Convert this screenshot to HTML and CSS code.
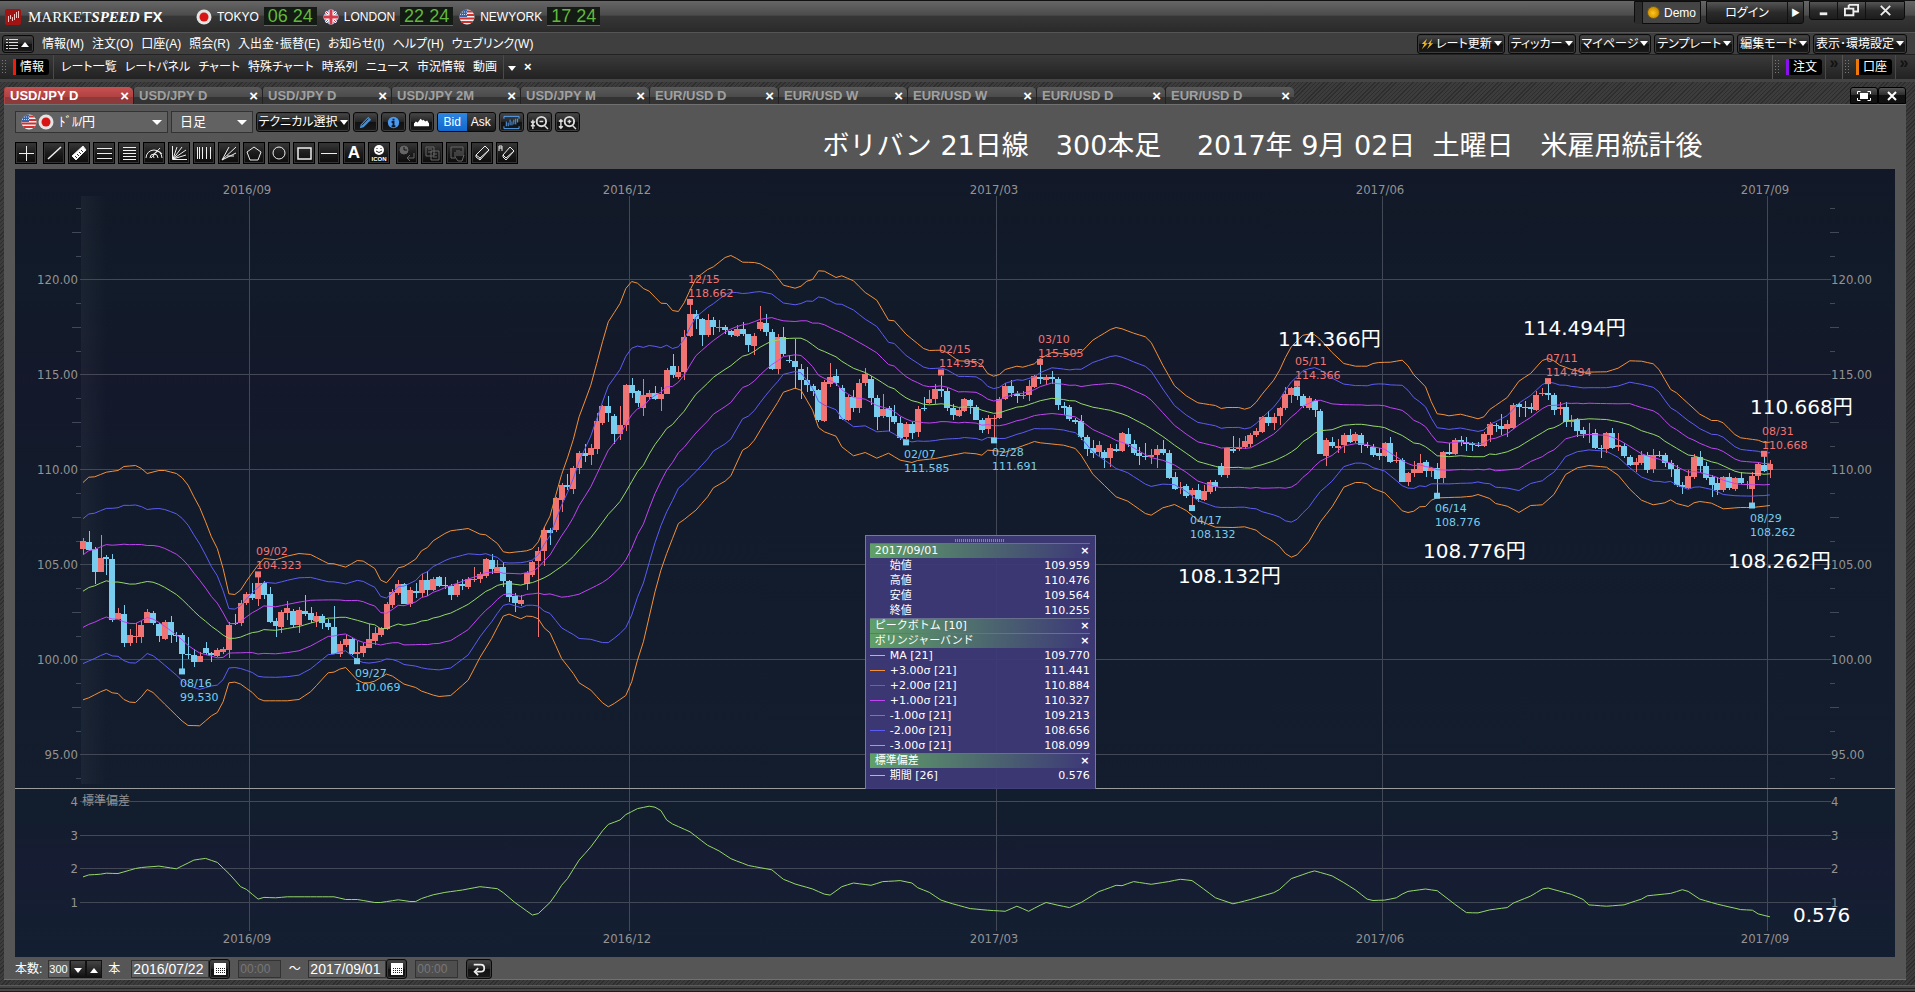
FILE: index.html
```html
<!DOCTYPE html>
<html lang="ja">
<head>
    <meta charset="UTF-8">
    <meta name="viewport" content="width=device-width, initial-scale=1.0">
    <title>MARKETSPEED FX</title>
    <link rel="stylesheet" href="styles.css">
</head>
<body>
    <!-- shared symbols -->
    <svg class="defs" width="0" height="0" aria-hidden="true">
        <symbol id="flag-jp" viewBox="0 0 16 16">
            <circle cx="8" cy="8" r="7.5" fill="#e4e4e4"/>
            <circle cx="8" cy="8" r="4.5" fill="#d81414"/>
        </symbol>
        <symbol id="flag-us" viewBox="0 0 16 16">
            <clipPath id="round"><circle cx="8" cy="8" r="7.5"/></clipPath>
            <g clip-path="url(#round)">
                <rect width="16" height="16" fill="#f2f2f2"/>
                <path d="M0 2.500h16M0 6h16M0 9.500h16M0 13h16" stroke="#cf3030" stroke-width="1.8"/>
                <rect width="8" height="8" fill="#3a64a8"/>
                <path d="M1 3h7M1 5.500h7" stroke="#c8d6ee" stroke-dasharray="1 1"/>
            </g>
        </symbol>
        <symbol id="flag-uk" viewBox="0 0 16 16">
            <g clip-path="url(#round)">
                <rect width="16" height="16" fill="#34529c"/>
                <path d="M2 2l12 12M14 2L2 14" stroke="#fff" stroke-width="3"/>
                <path d="M2 2l12 12M14 2L2 14" stroke="#d43a4a" stroke-width="1"/>
                <path d="M8 0v16M0 8h16" stroke="#fff" stroke-width="5"/>
                <path d="M8 0v16M0 8h16" stroke="#d43a4a" stroke-width="3"/>
            </g>
        </symbol>
        <symbol id="calendar" viewBox="0 0 16 16">
            <path d="M2 2h12v12H2z" fill="#fff"/>
            <path d="M4 7.500h9M4 9.500h9M4 11.500h9" stroke="#222" stroke-dasharray="1 1"/>
        </symbol>
    </svg>

    <header class="titlebar">
        <svg class="logo" viewBox="0 0 16 16"><rect width="16" height="16" rx="2" fill="#a01414"/><path d="M3.500 7v6M5.500 6v4M7.500 8v4M9.500 5v6M11.500 3v6M13.500 2v7" stroke="#f3c4c4"/></svg>
        <div class="brand">MARKET<i>SPEED</i> <b>FX</b></div>
        <div class="city"><svg class="flag"><use href="#flag-jp"/></svg>TOKYO<span class="clock">06 24</span></div>
        <div class="city"><svg class="flag"><use href="#flag-uk"/></svg>LONDON<span class="clock">22 24</span></div>
        <div class="city"><svg class="flag"><use href="#flag-us"/></svg>NEWYORK<span class="clock">17 24</span></div>
        <div class="account">
            <div class="demo"><i></i><span class="lamp"></span>Demo</div>
            <div class="login"><button>ログイン</button><button class="next" aria-label="次へ">▶</button></div>
            <div class="window-buttons">
                <button aria-label="最小化"><svg viewBox="0 0 16 16"><path d="M4 10h8v3H4z" fill="#eee"/></svg></button>
                <button aria-label="元に戻す"><svg viewBox="0 0 16 16"><path d="M5 2h10v7h-4M5 2v4M1 6h9v7H1z" fill="none" stroke="#eee" stroke-width="2"/></svg></button>
                <button class="wide" aria-label="閉じる"><svg viewBox="0 0 16 16"><path d="M3 3l10 10M13 3L3 13" stroke="#eee" stroke-width="2"/></svg></button>
            </div>
        </div>
    </header>

    <div class="menubar">
        <button class="btn menu-toggle" aria-label="メニュー"><svg viewBox="0 0 28 14"><path d="M2 2.500h2M5 2.500h9M2 5.500h2M5 5.500h9M2 8.500h2M5 8.500h9M2 11.500h2M5 11.500h9" stroke="#ddd"/><path d="M17 10h8l-4-5z" fill="#fff"/></svg></button>
        <nav class="menu">
            <a href="#">情報(M)</a>
            <a href="#">注文(O)</a>
            <a href="#">口座(A)</a>
            <a href="#">照会(R)</a>
            <a href="#">入出金･振替(E)</a>
            <a href="#">お知らせ(I)</a>
            <a href="#">ヘルプ(H)</a>
            <a href="#">ウェブリンク(W)</a>
        </nav>
        <div class="quick">
            <button class="btn flash"><svg viewBox="0 0 16 16"><path d="M8 2L2 8h3l-3 6 7-7H6zM14 2L9 8h2l-3 6 7-7h-3z" fill="#f0b81c"/></svg>レート更新<i class="arrow"></i></button>
            <button class="btn">ティッカー<i class="arrow"></i></button>
            <button class="btn">マイページ<i class="arrow"></i></button>
            <button class="btn">テンプレート<i class="arrow"></i></button>
            <button class="btn">編集モード<i class="arrow"></i></button>
            <button class="btn">表示･環境設定<i class="arrow"></i></button>
        </div>
    </div>

    <div class="infobar">
        <i class="grip"></i>
        <a class="group red" href="#">情報</a>
        <nav class="links">
            <a href="#">レート一覧</a>
            <a href="#">レートパネル</a>
            <a href="#">チャート</a>
            <a href="#">特殊チャート</a>
            <a href="#">時系列</a>
            <a href="#">ニュース</a>
            <a href="#">市況情報</a>
            <a href="#">動画</a>
        </nav>
        <button class="plain" aria-label="その他"><i class="arrow"></i></button>
        <button class="plain" aria-label="閉じる">×</button>
        <div class="side"><i class="grip"></i><a class="group purple" href="#">注文</a><span class="more">»</span></div>
        <div class="side"><i class="grip"></i><a class="group orange" href="#">口座</a><span class="more">»</span></div>
    </div>

    <main class="workspace">
        <div class="tabs">
            <div class="tab active">USD/JPY D<button aria-label="閉じる">×</button></div>
            <div class="tab">USD/JPY D<button aria-label="閉じる">×</button></div>
            <div class="tab">USD/JPY D<button aria-label="閉じる">×</button></div>
            <div class="tab">USD/JPY 2M<button aria-label="閉じる">×</button></div>
            <div class="tab">USD/JPY M<button aria-label="閉じる">×</button></div>
            <div class="tab">EUR/USD D<button aria-label="閉じる">×</button></div>
            <div class="tab">EUR/USD W<button aria-label="閉じる">×</button></div>
            <div class="tab">EUR/USD W<button aria-label="閉じる">×</button></div>
            <div class="tab">EUR/USD D<button aria-label="閉じる">×</button></div>
            <div class="tab">EUR/USD D<button aria-label="閉じる">×</button></div>
            <div class="tab-tools">
                <button aria-label="全画面"><svg viewBox="0 0 16 12"><path d="M4 3h8v6H4z" fill="#fff"/><path d="M1.500 4V1.500h3M11.500 1.500h3V4M14.500 8v2.500h-3M4.500 10.500h-3V8" fill="none" stroke="#fff"/></svg></button>
                <button aria-label="閉じる"><svg viewBox="0 0 16 12"><path d="M4 2l8 8M12 2l-8 8" stroke="#fff" stroke-width="2"/></svg></button>
            </div>
        </div>

        <section class="panel">
            <div class="head">
                <div class="tools">
                    <div class="row">
                        <label class="select pair"><svg class="flag"><use href="#flag-us"/></svg><svg class="flag"><use href="#flag-jp"/></svg><select aria-label="通貨ペア"><option>ﾄﾞﾙ/円</option></select><i class="arrow"></i></label>
                        <label class="select span"><select aria-label="足種"><option>日足</option></select><i class="arrow"></i></label>
                        <button class="btn technical">テクニカル選択<i class="arrow"></i></button>
                        <button class="btn icon" aria-label="描画"><svg viewBox="0 0 18 18"><path d="M3 15l1-4 8-8 3 3-8 8z" fill="#3f8fe0"/><path d="M5 12l7-7" stroke="#123"/></svg></button>
                        <button class="btn icon" aria-label="情報"><svg viewBox="0 0 18 18"><circle cx="9" cy="9" r="6" fill="#4a9af0"/><path d="M9 5v2M7 8.500h2V13M7 13h4" fill="none" stroke="#0b1a2c" stroke-width="2"/></svg></button>
                        <button class="btn icon" aria-label="エリア"><svg viewBox="0 0 18 18"><path d="M1 13v-3l2-2 2 1 3-4 2 2 1-1 2 2 2-1 2 3v3z" fill="#fff"/></svg></button>
                        <div class="bidask"><button class="on">Bid</button><button>Ask</button></div>
                        <button class="btn icon" aria-label="チャート表示"><svg viewBox="0 0 20 18"><path d="M2 5V2.500h16V5M2 13v2.500h16V13M4.500 8v5M6.500 9v4M8.500 6v6M10.500 8v4M12.500 6v5M14.500 5v6M16.500 5v4" fill="none" stroke="#5aa8fa"/></svg></button>
                        <button class="btn icon" aria-label="縮小"><svg viewBox="0 0 20 18"><circle cx="12" cy="8" r="5" fill="none" stroke="#ddd" stroke-width="2"/><path d="M10 8h4M15 12l4 4M3 6v3M3 12v4M1 8l2 2 2-2M1 13l2-2 2 2" fill="none" stroke="#ddd" stroke-width="1.5"/></svg></button>
                        <button class="btn icon" aria-label="拡大"><svg viewBox="0 0 20 18"><circle cx="12" cy="8" r="5" fill="none" stroke="#ddd" stroke-width="2"/><path d="M10 8h4M12 6v4M15 12l4 4M3 6v9M1 8l2-2 2 2M1 13l2 2 2-2" fill="none" stroke="#ddd" stroke-width="1.5"/></svg></button>
                    </div>
                    <div class="row draw">
                        <button class="sq gap" aria-label="十字"><svg viewBox="0 0 18 18"><path d="M9.500 2v15M2 9.500h15"/></svg></button>
                        <button class="sq" aria-label="直線"><svg viewBox="0 0 18 18"><path d="M3 15L16 3" stroke-width="1.5"/></svg></button>
                        <button class="sq" aria-label="定規"><svg viewBox="0 0 18 18"><path d="M2 12L13 2l3 4L6 16z" fill="#fff"/><path d="M5 12l2 2M7 10l2 2M9 8l2 2M11 6l2 2" stroke="#333"/></svg></button>
                        <button class="sq" aria-label="平行線"><svg viewBox="0 0 18 18"><path d="M2 4.500h15M2 9.500h15M2 14.500h15"/></svg></button>
                        <button class="sq" aria-label="水平線群"><svg viewBox="0 0 18 18"><path d="M3 3.500h13M3 6.500h13M3 9.500h13M3 12.500h13M3 15.500h13"/></svg></button>
                        <button class="sq" aria-label="アーク"><svg viewBox="0 0 18 18"><path d="M1 14a8 8 0 0 1 16 0M5 14a4 4 0 0 1 8 0M9 14a4 4 0 0 1 8-4M6 14L15 4"/></svg></button>
                        <button class="sq" aria-label="ファン"><svg viewBox="0 0 18 18"><path d="M2.500 2v13.500H17M3 15L7 3M3 15l9-12M3 15l13-9M3 15l13-4"/></svg></button>
                        <button class="sq" aria-label="タイムゾーン"><svg viewBox="0 0 18 18"><path d="M2.500 3v12M4.500 3v12M7.500 3v12M11.500 3v12M15.500 3v12"/></svg></button>
                        <button class="sq" aria-label="放射線"><svg viewBox="0 0 18 18"><path d="M2 16L9 3M2 16L16 3M2 16l14-7M7 12h7"/></svg></button>
                        <button class="sq" aria-label="五角形"><svg viewBox="0 0 18 18"><path d="M9 3l7 5-3 8H5L2 8z"/></svg></button>
                        <button class="sq" aria-label="円"><svg viewBox="0 0 18 18"><circle cx="9" cy="9" r="6"/></svg></button>
                        <button class="sq" aria-label="四角"><svg viewBox="0 0 18 18"><path d="M3 4h13v11H3z" stroke-width="1.5"/></svg></button>
                        <button class="sq" aria-label="水平線"><svg viewBox="0 0 18 18"><path d="M1 9.500h16"/></svg></button>
                        <button class="sq letter">A</button>
                        <button class="sq gap smile"><svg viewBox="0 0 18 12"><circle cx="9" cy="6" r="5" fill="#fff" stroke="none"/><path d="M7 4v1M11 4v1M6 7q3 3 6 0" stroke="#222"/></svg>ICON</button>
                        <button class="sq off" aria-label="時刻"><svg viewBox="0 0 18 18"><circle cx="6" cy="6" r="4" fill="#666"/><path d="M6 3v3h3" stroke="#111"/><path d="M16 9v5H9M12 11l-3 3 3 3"/></svg></button>
                        <button class="sq off" aria-label="コピー"><svg viewBox="0 0 18 18"><path d="M3 3h8v9H3zM5 5h4M5 8h4M8 7h8v9H8zM10 10h4M10 13h4"/></svg></button>
                        <button class="sq off" aria-label="移動"><svg viewBox="0 0 18 18"><path d="M3 3h12v9M3 3v11h4M7 13V8M9 12V6M11 12V6M13 12V7M7 13l3 4h4l2-6"/></svg></button>
                        <button class="sq" aria-label="消去"><svg viewBox="0 0 18 18"><path d="M3 11L12 2l4 4-9 10-4-3zM3 11l4 3 9-8M7 14v2"/></svg></button>
                        <button class="sq" aria-label="全消去"><svg viewBox="0 0 18 18"><path d="M5 11l7-8 4 4-8 9-3-3zM5 11l3 3 8-7"/><path d="M1 7V2h3v5M1 4h3"/></svg></button>
                    </div>
                </div>
                <h1>ボリバン 21日線　300本足　 2017年 9月 02日&nbsp; 土曜日　米雇用統計後</h1>
            </div>

            <div class="chart">
                <svg id="chart" viewBox="0 0 1880 788" role="img" aria-label="USD/JPY 日足チャート"></svg>

                <table class="readout">
                    <thead><tr><td class="handle" colspan="3"></td></tr></thead>
                    <tbody>
                        <tr class="title"><th colspan="2">2017/09/01</th><td><button aria-label="閉じる">×</button></td></tr>
                        <tr><td></td><th>始値</th><td>109.959</td></tr>
                        <tr><td></td><th>高値</th><td>110.476</td></tr>
                        <tr><td></td><th>安値</th><td>109.564</td></tr>
                        <tr><td></td><th>終値</th><td>110.255</td></tr>
                        <tr class="title"><th colspan="2">ピークボトム [10]</th><td><button aria-label="閉じる">×</button></td></tr>
                        <tr class="title"><th colspan="2">ボリンジャーバンド</th><td><button aria-label="閉じる">×</button></td></tr>
                        <tr><td><i class="line ma"></i></td><th>MA [21]</th><td>109.770</td></tr>
                        <tr><td><i class="line s3"></i></td><th>+3.00σ [21]</th><td>111.441</td></tr>
                        <tr><td><i class="line s2"></i></td><th>+2.00σ [21]</th><td>110.884</td></tr>
                        <tr><td><i class="line s1"></i></td><th>+1.00σ [21]</th><td>110.327</td></tr>
                        <tr><td><i class="line s1"></i></td><th>-1.00σ [21]</th><td>109.213</td></tr>
                        <tr><td><i class="line s2"></i></td><th>-2.00σ [21]</th><td>108.656</td></tr>
                        <tr><td><i class="line s3"></i></td><th>-3.00σ [21]</th><td>108.099</td></tr>
                        <tr class="title"><th colspan="2">標準偏差</th><td><button aria-label="閉じる">×</button></td></tr>
                        <tr><td><i class="line ma"></i></td><th>期間 [26]</th><td>0.576</td></tr>
                    </tbody>
                </table>
            </div>

            <form class="range">
                <label for="bars">本数:</label>
                <div class="spinner">
                    <input id="bars" type="text" value="300">
                    <button type="button" aria-label="減らす"><i class="arrow"></i></button>
                    <button type="button" aria-label="増やす"><i class="arrow up"></i></button>
                </div>
                <span class="unit">本</span>
                <input class="date" type="text" value="2016/07/22" aria-label="開始日">
                <button class="btn cal" type="button" aria-label="カレンダー"><svg><use href="#calendar"/></svg></button>
                <input class="time" type="text" value="00:00" disabled aria-label="開始時刻">
                <span class="tilde">～</span>
                <input class="date" type="text" value="2017/09/01" aria-label="終了日">
                <button class="btn cal" type="button" aria-label="カレンダー"><svg><use href="#calendar"/></svg></button>
                <input class="time" type="text" value="00:00" disabled aria-label="終了時刻">
                <button class="btn back" type="button" aria-label="戻す"><svg viewBox="0 0 18 16"><path d="M3 3h8q4 0 4 4t-4 4H6M8 7l-4 4 4 4" fill="none" stroke="#eee" stroke-width="2"/></svg></button>
            </form>
        </section>
    </main>
    <footer class="frame"></footer>

    <script src="chart.js"></script>
</body>
</html>
```
FILE: styles.css
```css
* {
    margin: 0;
    padding: 0;
    box-sizing: border-box;
}

body {
    font-family: "Liberation Sans", "Noto Sans CJK JP", sans-serif;
    font-size: 12px;
    line-height: 16px;
    font-feature-settings: "palt";
    color: #fff;
    background: #444;
    min-height: 100vh;
    overflow-x: hidden;
}

a {
    color: inherit;
    text-decoration: none;
}

button, input, select {
    font: inherit;
    color: inherit;
    font-feature-settings: inherit;
}

button {
    border: none;
    background: none;
    cursor: pointer;
    white-space: nowrap;
}

svg {
    display: block;
}

.defs {
    position: absolute;
}

.arrow {
    display: inline-block;
    border: 4px solid transparent;
    border-top: 5px solid #fff;
    border-bottom: none;
}

.arrow.up {
    border-top: none;
    border-bottom: 5px solid #fff;
}

.flag {
    width: 16px;
    height: 16px;
}

.btn {
    display: flex;
    align-items: center;
    justify-content: center;
    height: 20px;
    border: 1px solid #0a0a0a;
    border-radius: 3px;
    background: linear-gradient(#484848, #242424 50%, #111 50%, #1a1a1a);
    box-shadow: inset 0 0 0 1px #3c3c3c;
}

/* title bar */
.titlebar {
    display: flex;
    align-items: center;
    height: 32px;
    padding-left: 5px;
    border-top: 1px solid #111;
    background: linear-gradient(#666, #4c4c4c 45%, #363636 50%, #2a2a2a);
}

.logo {
    width: 16px;
    height: 16px;
}

.brand {
    margin: 0 30px 0 7px;
    width: 138px;
    font: 15px "Liberation Serif", serif;
    white-space: nowrap;
}

.brand i {
    font-weight: bold;
}

.brand b {
    font-family: "Liberation Sans", sans-serif;
}

.city {
    display: flex;
    align-items: center;
    gap: 5px;
    margin-right: 6px;
    font-size: 12px;
}

.clock {
    width: 53px;
    height: 19px;
    background: #141a14;
    border-bottom: 1px solid #666;
    color: #62b83c;
    font-size: 18px;
    line-height: 19px;
    text-align: center;
}

.account {
    display: flex;
    align-items: flex-start;
    gap: 5px;
    height: 31px;
    margin-left: auto;
    padding-right: 10px;
}

.demo, .login, .window-buttons {
    display: flex;
    align-items: center;
    height: 23px;
    border: 1px solid #0c0c0c;
    border-radius: 0 0 3px 3px;
    background: linear-gradient(#555, #2a2a2a 50%, #1c1c1c);
}

.demo {
    width: 67px;
    gap: 4px;
    background: #444;
}

.demo i {
    width: 8px;
    height: 22px;
    background: #2c2c2c;
    border-right: 1px solid #111;
}

.lamp {
    width: 13px;
    height: 13px;
    border-radius: 50%;
    background: radial-gradient(circle at 45% 55%, #ffc71c, #c98a00 70%);
    border: 1px solid #6b5a28;
}

.login button {
    width: 80px;
    height: 21px;
}

.login .next {
    width: 16px;
    border-left: 1px solid #111;
    font-size: 9px;
}

.window-buttons {
    height: 19px;
}

.window-buttons button {
    display: flex;
    justify-content: center;
    align-items: center;
    width: 28px;
    height: 17px;
    border-right: 1px solid #111;
}

.window-buttons .wide {
    width: 38px;
    border-right: none;
}

.window-buttons svg {
    width: 15px;
    height: 15px;
}

/* menus */
.menubar {
    display: flex;
    align-items: center;
    height: 22px;
    padding: 0 8px 0 2px;
    border-top: 1px solid #555;
    background: #3f3f3f;
}

.menu-toggle {
    width: 32px;
    height: 18px;
}

.menu-toggle svg {
    width: 28px;
    height: 14px;
}

.menu {
    display: flex;
    gap: 8px;
    margin-left: 8px;
    white-space: nowrap;
}

.quick {
    display: flex;
    gap: 3px;
    margin-left: auto;
}

.quick .btn {
    gap: 2px;
    padding: 0 2px;
}

.flash svg {
    width: 14px;
    height: 14px;
}

.infobar {
    display: flex;
    align-items: center;
    height: 28px;
    padding-right: 3px;
    border-top: 1px solid #222;
    border-bottom: 3px solid #444;
    background: linear-gradient(#3a3a3a, #222);
    white-space: nowrap;
}

.grip {
    width: 7px;
    height: 16px;
    margin: 0 5px 0 1px;
    background: radial-gradient(circle, #777 1px, transparent 1px) 0 0 / 3px 3px;
}

.group {
    padding: 0 5px 0 4px;
    border-left: 3px solid;
    border-radius: 0 3px 3px 0;
    background: #000;
    font-size: 12px;
    line-height: 16px;
}

.group.red {
    border-color: #f21c0c;
}

.group.purple {
    border-color: #8a10f0;
}

.group.orange {
    border-color: #f07808;
}

.links {
    display: flex;
    align-items: center;
    gap: 8px;
    height: 24px;
    margin-left: 4px;
    padding: 0 6px 0 7px;
    border-left: 1px solid #4a4a4a;
    border-right: 1px solid #4a4a4a;
}

.plain {
    padding: 0 4px;
    font-size: 13px;
    font-weight: bold;
}

.side {
    display: flex;
    align-items: center;
    height: 24px;
    border-left: 1px solid #555;
}

.side:nth-last-child(2) {
    margin-left: auto;
}

.more {
    width: 17px;
    height: 24px;
    margin-left: 3px;
    border-left: 1px solid #4a4a4a;
    color: #111;
    font-size: 16px;
    font-weight: bold;
    text-align: center;
}

/* workspace */
.workspace {
    padding: 5px 9px 5px 4px;
    background: repeating-linear-gradient(135deg, #2e2e2e 0 1px, #3c3c3c 1px 3px);
}

.tabs {
    display: flex;
    height: 17px;
}

.tab {
    display: flex;
    justify-content: space-between;
    align-items: center;
    width: 129px;
    padding: 0 4px 0 5px;
    border-left: 1px solid #222;
    border-radius: 3px 5px 0 0;
    background: linear-gradient(#5a5a5a, #4a4a4a 60%, #333 60%);
    color: #a0a0a0;
    font-size: 13px;
    font-weight: bold;
    line-height: 17px;
}

.tab.active {
    background: linear-gradient(#c85050, #b04242 60%, #8e3a3a 60%);
    border-color: #b04242;
    color: #fff;
}

.tab button {
    color: #fff;
    font-size: 15px;
    line-height: 15px;
}

.tab-tools {
    display: flex;
    margin-left: auto;
}

.tab-tools button {
    display: flex;
    align-items: center;
    justify-content: center;
    width: 28px;
    border: 1px solid #000;
    border-radius: 3px 3px 0 0;
    background: linear-gradient(#555, #2a2a2a 50%, #111 50%);
}

.tab-tools svg {
    width: 16px;
    height: 12px;
}

.panel {
    padding: 7px 11px 0;
    background: #565656;
    box-shadow: inset 0 1px #707070, inset 0 -1px #707070;
}

.head {
    display: flex;
    align-items: center;
    padding-bottom: 5px;
}

.tools {
    display: flex;
    flex-direction: column;
    gap: 9px;
}

.row {
    display: flex;
    align-items: center;
    gap: 3px;
    height: 22px;
}

.select {
    display: flex;
    align-items: center;
    height: 22px;
    border: 1px solid #333;
    background: #626262;
}

.select select {
    flex: 1;
    appearance: none;
    border: none;
    outline: none;
    background: none;
    font-size: 13px;
}

.select .arrow {
    margin-right: 5px;
    border-width: 5px 5px 0;
}

.pair {
    width: 153px;
    padding-left: 5px;
    gap: 1px;
}

.pair select {
    padding-left: 4px;
}

.span {
    width: 82px;
    padding-left: 8px;
}

.technical {
    width: 94px;
    gap: 2px;
}

.icon {
    width: 25px;
}

.icon svg {
    width: 19px;
    height: 17px;
}

.bidask {
    display: flex;
    width: 59px;
    height: 20px;
    border: 1px solid #0a0a0a;
    border-radius: 3px;
    background: linear-gradient(#444, #1a1a1a);
    overflow: hidden;
}

.bidask button {
    flex: 1;
}

.bidask .on {
    background: linear-gradient(#2f86e0, #1268cc);
}

.sq {
    display: flex;
    flex-direction: column;
    align-items: center;
    justify-content: center;
    width: 22px;
    height: 22px;
    border: 1px solid #000;
    background: linear-gradient(#383838, #1c1c1c 50%, #0c0c0c);
    box-shadow: inset 0 0 0 1px #333;
}

.sq.gap {
    margin-right: 3px;
}

.sq svg {
    width: 18px;
    height: 18px;
    fill: none;
    stroke: #eee;
}

.sq.off svg {
    stroke: #666;
}

.sq.letter {
    font-size: 17px;
    font-weight: bold;
}

.sq.smile {
    font-size: 6px;
    font-weight: bold;
    line-height: 6px;
}

.sq.smile svg {
    height: 12px;
}

h1 {
    margin: 0 auto;
    padding: 16px 0 0 50px;
    font: 27px/34px "DejaVu Sans", "Noto Sans CJK JP", sans-serif;
    font-feature-settings: normal;
    white-space: pre;
}

/* chart */
.chart {
    position: relative;
}

.chart > svg {
    width: 100%;
    height: auto;
}

.grid {
    stroke: #434856;
    shape-rendering: crispEdges;
}

.divider {
    stroke: #9a9c9e;
    shape-rendering: crispEdges;
}

.axis {
    fill: #939393;
    font: 13px "DejaVu Sans Condensed", "Noto Sans CJK JP", sans-serif;
    font-feature-settings: normal;
}

.axis.name {
    font-size: 12px;
}

.candle {
    shape-rendering: crispEdges;
}

.up {
    fill: #f07474;
    stroke: none;
}

.down {
    fill: #78cdee;
    stroke: none;
}

.peak {
    font: 11px "DejaVu Sans", sans-serif;
}

.note {
    fill: #fff;
    font: 20px "DejaVu Sans", "Noto Sans CJK JP", sans-serif;
    font-feature-settings: normal;
}

.series {
    fill: none;
    stroke-width: 1;
}

.series.ma {
    stroke: #96d868;
}

.series.s1 {
    stroke: #c044f4;
}

.series.s2 {
    stroke: #5c5cf4;
}

.series.s3 {
    stroke: #f49038;
}

.readout {
    position: absolute;
    left: 45.2%;
    bottom: 21.3%;
    width: 231px;
    padding: 0 5px 6px 4px;
    border: 1px solid #7577a4;
    border-bottom: none;
    border-spacing: 0;
    background: rgba(61, 57, 120, 0.94);
    font: 11px/15px "DejaVu Sans", "Noto Sans CJK JP", sans-serif;
}

.readout th {
    height: 15px;
    text-align: left;
    font-weight: normal;
    line-height: 15px;
}

.readout td {
    height: 15px;
    text-align: right;
    line-height: 15px;
}

.readout td:first-child {
    width: 20px;
}

.readout .handle {
    height: 7px;
    background: repeating-linear-gradient(90deg, #888 0 1px, transparent 1px 2px) center 3px / 50px 3px no-repeat;
}

.readout .title {
    background: linear-gradient(90deg, #60a068, #4a6070 60%, #3d3978);
}

.readout .title th,
.readout .title td {
    border-top: 1px solid #68708e;
    line-height: 14px;
}

.readout .title th {
    padding-left: 5px;
}

.readout .title button {
    width: 10px;
    font-size: 11px;
    font-weight: bold;
    line-height: 13px;
}

.line {
    display: block;
    width: 15px;
    height: 1px;
}

.line.ma {
    background: #96d868;
}

.line.s1 {
    background: #c044f4;
}

.line.s2 {
    background: #5c5cf4;
}

.line.s3 {
    background: #f49038;
}

/* bottom row */
.range {
    display: flex;
    align-items: center;
    height: 23px;
}

.range input {
    height: 18px;
    padding: 0 1px;
    border: 1px solid #333;
    background: #626262;
}

.spinner {
    display: flex;
    margin: 0 6px;
}

.range .spinner input {
    width: 22px;
    padding: 0;
    font-size: 11px;
}

.spinner button {
    width: 16px;
    height: 18px;
    border: 1px solid #111;
    background: linear-gradient(#444, #111);
    line-height: 10px;
}

.unit {
    margin-right: 11px;
}

.range .date {
    width: 78px;
    font-size: 14px;
}

.cal {
    width: 21px;
}

.cal svg {
    width: 16px;
    height: 16px;
}

.range .time {
    width: 43px;
    margin-left: 8px;
    background: #4e4e4e;
    color: #777;
}

.tilde {
    width: 27px;
    text-align: center;
}

.back {
    width: 26px;
    margin-left: 8px;
}

.back svg {
    width: 16px;
    height: 14px;
}

.frame {
    height: 7px;
    background: linear-gradient(#5a5a5a 0 1px, #444 1px 3px, #222 3px 4px, #484848 4px 6px, #1c1c1c 6px);
}
```
FILE: chart.js
```javascript
const svg = document.getElementById('chart');
const NS = 'http://www.w3.org/2000/svg';

// Bars are packed as "open,high,low,close" in 1/57 yen below the base of their block
const TICK = 57;
const blocks = [
    { start: 0, base: 109.44, bars: `208,173,222,183 186,154,212,209 206,200,312,277 275,165,275,235 230,225,285,237
        237,222,425,419 418,385,418,400 403,376,500,488 488,448,497,465 470,430,490,467 470,422,490,435 430,388,430,397
        400,393,436,430 432,428,486,467 477,420,480,427 427,408,490,465 465,457,487,467 466,460,570,521 521,472,538,523
        525,508,560,546 545,515,547,527 503,485,525,520 520,515,545,526 527,505,531,511 515,502,522,507 510,425,535,434
        430,402,436,432 430,360,437,369 369,337,376,343 343,310,360,354 356,285,378,308 308,303,358,344 342,320,430,425
        422,415,470,438 440,390,460,396 400,362,420,385 393,386,440,435 434,381,460,391 392,345,408,403 399,382,430,420
        423,396,441,407 408,402,446,430 429,418,450,440 440,378,522,521 521,483,532,493 496,466,500,478 478,475,525,521
        521,482,535,516 520,490,531,499 503,433,505,478 483,440,495,460 464,440,470,445 448,367,450,373 374,328,385,336
        338,300,345,312 312,308,372,371 373,322,380,331 332,308,355,338 338,282,352,299 300,273,347,330 330,290,333,297
        291,288,322,318 314,290,326,318 318,312,360,345 345,300,350,311 311,298,330,319 320,292,326,298 300,260,305,296
        298,275,308,283 287,233,294,237 240,222,282,266 278,240,280,262 262,245,322,303 303,300,365,350 348,338,395,370
        372,345,378,361 311,272,330,278 284,242,290,246 242,200,470,213 212,142,258,149 149,143,195,159 149,50,155,55
        60,8,96,14` },
    { start: 83, base: 126.28, bars: `975,940,990,981 986,917,1000,922 922,873,940,877 877,850,905,887 885,850,915,863
        867,758,882,783 787,735,795,738 738,706,785,758 768,760,850,821 821,738,838,793 793,670,812,673 675,653,712,698` },
    { start: 95, base: 122.596, bars: `483,480,530,518 533,447,556,495 500,480,505,488 488,468,508,505 505,470,543,490
        490,412,492,418 408,370,442,434 440,408,447,426 426,298,448,319 317,225,320,250 252,238,295,265 266,262,348,314
        314,250,320,270 268,260,315,290 291,270,306,289 290,285,310,300 302,298,320,314 317,285,320,295 297,275,318,310
        312,310,365,345 347,308,375,317 297,228,303,276 278,252,316,304 305,295,420,415 415,310,432,321 319,290,378,372
        388,375,398,392 391,325,475,411 417,400,506,449 450,410,486,464 468,462,498,482 480,475,575,570 572,448,575,455
        461,397,470,441 438,415,468,457 474,465,570,565 570,495,573,501 501,478,545,534 533,445,548,457 459,412,468,430
        447,437,523,503 504,495,600,560 558,492,562,536 534,527,603,560 556,523,580,574 577,560,628,624 621,575,625,582
        582,575,626,608 606,528,620,535 533,500,543,536 517,480,520,507 507,462,520,475 477,437,500,483 483,473,542,534
        533,520,570,555 557,533,560,540 543,503,545,507 510,505,550,527 530,523,570,568 568,563,608,598 597,555,612,563
        567,555,630,562 563,500,565,505 507,457,510,468 468,450,500,488 492,483,518,496 498,483,507,493 494,448,512,468
        470,435,472,438 441,405,460,447 448,435,463,441 440,423,460,447 447,440,538,524 527,515,553,532 531,523,572,565
        568,562,580,575 573,555,630,620 620,615,678,655 653,630,683,667 665,632,680,645 665,660,712,683 682,640,710,652
        656,640,665,661 663,605,665,608 612,593,650,640 640,630,675,668 668,650,703,677 676,637,688,678 680,655,700,673
        673,643,712,655 657,628,673,667 668,660,745,742 740,725,780,777 773,755,790,770 768,762,803,797 793,773,830,780
        780,762,815,807` },
    { start: 192, base: 119.965, bars: `660,615,662,633 636,600,642,607 605,600,632,620 557,550,592,585 585,500,593,503
        508,467,520,513 508,475,513,500 500,468,508,484 491,458,502,465 465,445,470,453 456,408,460,412 410,393,437,430
        430,400,450,412 407,380,435,384 385,322,390,342 345,320,370,325 321,318,360,348 348,343,385,379 385,347,390,354
        363,357,410,391 392,388,522,521 529,475,557,481 486,470,505,497 503,478,518,499 496,460,520,466 466,447,490,485
        484,455,490,462 464,458,520,494 494,485,505,497 500,493,530,524 520,505,540,528 527,485,532,490 490,470,550,545
        541,517,550,541 540,535,607,605 605,575,618,578 580,543,590,568 580,522,580,549 545,540,590,573 573,560,590,565
        565,548,640,597 594,513,608,516 516,490,525,521 522,475,525,480 480,468,497,485 487,470,512,491 488,485,512,495
        494,485,500,499 498,455,502,462 464,427,485,433 436,428,455,437 438,402,465,447 446,420,470,432 445,370,448,375
        373,368,410,382 382,362,410,383 382,370,400,387 389,333,392,346 342,325,348,340 340,310,360,345 345,340,405,390
        388,367,405,382 380,365,440,427 425,405,440,419 420,415,470,452 450,440,475,463 462,430,490,462 460,448,508,504
        503,495,535,506 507,455,520,460 459,445,508,504 502,460,513,495 498,490,535,528 531,525,558,555 555,535,577,547
        550,513,555,525 525,515,578,570 568,508,580,525 525,512,530,526 526,518,560,549 548,540,590,568 568,555,620,615
        614,605,642,620 624,570,628,588 590,522,597,530 531,512,575,558 558,545,600,594 591,585,650,614 609,590,645,629
        629,588,636,591 592,578,630,625 627,590,632,594 595,575,613,609 613,602,627,612 628,575,675,588 589,545,600,553
        555,515,575,573 570,540,593,553` }
];

// Outer bands as "bar:offset" turning points
const upper = [
    [126.28, '0:967 1:951 2:950 4:936 6:931 7:919 9:916 10:925 11:940 13:931 14:931 16:940 17:953 18:975'],
    [109.44, '19:50 20:82 21:125 22:170 23:205 24:265 25:341 26:343 27:330 28:303 29:278 30:255 31:235 33:239 35:228 37:220 39:223 40:232 42:250 43:251 45:261 47:241 48:243 50:265 51:300 52:308 53:288 54:263 55:259 57:237 58:212 59:202 60:182 62:160 63:152 66:145 68:162 69:164 71:190 72:215 73:218 76:212 77:206 78:185 79:143 80:108 81:45'],
    [126.28, '82:943 83:893 84:838 85:770 87:675 88:610'],
    [122.596, '89:335 90:275 92:220 93:175 94:154 95:159 96:175 97:183 99:219 100:220 101:241 102:244 103:218 104:180 105:145 107:118 108:110 110:82 111:76 112:85 113:96 115:97 116:101 118:121 120:165 122:174 123:168 124:153 125:148 126:122 127:123 129:142 130:137 132:152 134:187 136:210 138:270 139:272 141:312 144:355 145:361 147:360 148:367 150:392 153:394 154:405 155:430 156:438 157:433 158:418 160:408 161:411 163:401 164:385 166:367 169:373 171:366 173:330 176:298 177:292 178:296 180:309 182:320 183:337 185:405 187:467 189:497'],
    [119.965, '191:368 194:376 195:385 196:382 198:382 199:387 200:382 201:366 202:342 204:300 205:270 206:232 207:200 209:165 210:162 211:164 212:178 214:217 216:250 218:258 220:258 221:250 222:247 224:246 226:240 227:257 228:284 230:320 231:365 232:401 233:403 234:407 236:402 238:411 239:416 240:410 241:388 242:376 244:352 246:303 248:280 250:241 251:235 252:242 253:255 255:268 257:276 261:275 263:264 265:242 267:243 269:251 270:268 272:328 273:338 275:370 277:402 279:421 280:421 281:428 283:463 284:473 287:480 288:487 289:486']
];
const lower = [
    [109.44, '0:659 1:653 3:635 4:628 5:638 6:640 7:658 8:666 9:667 10:650 11:628 12:637 14:672 17:723 18:736 20:737 22:707 23:697 24:665 25:608 26:606 27:612 29:637 30:655 31:662 35:662 37:658 39:635 42:578 43:576 44:567 45:562 47:600 48:608 49:608 50:603 51:592 52:582 53:588 55:612 57:622 58:633 60:645 61:649 63:646 66:600 68:532 70:475 72:408 73:402 75:416 76:408 77:409 78:416 79:443 80:458 82:535 84:580 85:608 87:630 89:668 90:680 91:670 93:646 94:605'],
    [122.596, '95:1290 96:1235 97:1160 98:1085 99:1020 100:970 101:925 102:880 103:868 105:840 107:800 108:773 110:753 111:737 113:660 114:650 115:630 117:572 119:517 120:486 122:474 123:480 124:510 125:540 126:592 127:605 129:618 130:650 132:677 134:667 136:684 138:669 140:690 142:697 143:691 146:685 151:668 153:671 154:675 155:660 156:661 158:666 161:647 163:634 164:638 168:645 170:655 171:675 173:732 177:800 179:813 182:850 183:855 185:833 187:823 189:841'],
    [119.965, '191:720 194:741 197:742 199:740 201:750 202:765 204:785 205:799 206:820 207:831 208:824 210:785 212:725 214:680 216:621 218:607 219:607 220:611 221:625 223:638 225:673 226:692 227:697 228:693 229:680 230:679 231:660 232:653 236:651 238:648 239:643 241:655 242:670 244:678 246:697 248:676 250:674 252:643 254:583 256:563 258:556 261:561 263:585 265:627 267:660 269:674 271:668 272:659 273:670 275:679 276:668 277:664 279:669 281:686 284:682 286:682 289:676']
];

// Standard deviation, "bar:value"
const deviation = '0:1.76 1:1.82 3:1.84 4:1.87 6:1.86 9:2.01 10:2.04 13:2.08 16:2 19:2.26 21:2.31 23:2.19 25:1.86 27:1.47 28:1.39 30:1.1 31:1.15 33:1.14 35:1.17 43:1.17 45:1.09 47:1.09 50:1 51:1 54:1.08 56:1.03 57:1.03 58:1.12 60:1.23 62:1.3 65:1.37 68:1.47 71:1.41 72:1.29 74:1 76:.75 77:.63 78:.67 80:1 81:1.24 82:1.51 83:1.71 85:2.26 87:2.65 89:3.13 90:3.32 92:3.45 93:3.61 95:3.79 97:3.86 98:3.83 99:3.73 100:3.45 101:3.33 104:3.1 107:2.7 109:2.53 111:2.3 114:2.1 118:1.97 120:1.69 122:1.55 125:1.4 127:1.25 128:1.22 130:1.47 132:1.58 135:1.51 137:1.62 140:1.65 142:1.58 143:1.44 145:1.3 147:1.07 149:.96 152:.82 155:.77 158:.74 160:.89 162:.74 164:.92 165:1 167:.92 169:.85 171:1 174:1.32 177:1.51 178:1.5 180:1.62 183:1.54 186:1.62 188:1.69 190:1.65 192:1.4 194:1.14 197:.96 198:1 200:1.09 204:1.29 205:1.39 207:1.71 210:1.89 211:1.94 214:1.79 216:1.59 218:1.37 220:1.1 221:1.06 223:1.07 225:1.14 226:1.25 227:1.33 230:1.4 232:1.35 235:.95 237:.7 239:.69 241:.78 244:.85 245:.98 248:1.19 250:1.4 251:1.43 255:1.24 257:1.09 258:.93 261:.89 264:.93 267:1.1 268:1.2 272:1.27 274:1.38 275:1.33 277:1.1 280:.95 284:.79 286:.77 287:.66 289:.576';

const peaks = [
    [30, '09/02', 104.323, 1], [104, '12/15', 118.662, 1], [147, '02/15', 114.952, 1], [164, '03/10', 115.505, 1],
    [208, '05/11', 114.366, 1], [251, '07/11', 114.494, 1], [288, '08/31', 110.668, 1],
    [17, '08/16', 99.530, 0], [47, '09/27', 100.069, 0], [141, '02/07', 111.585, 0], [156, '02/28', 111.691, 0],
    [190, '04/17', 108.132, 0], [232, '06/14', 108.776, 0], [286, '08/29', 108.262, 0]
];

const notes = [
    [1263, 177, '114.366円'], [1508, 166, '114.494円'], [1735, 245, '110.668円'], [1163, 414, '108.132円'],
    [1408, 389, '108.776円'], [1713, 399, '108.262円'], [1778, 753, '0.576']
];

const months = [[234, '2016/09'], [614, '2016/12'], [981, '2017/03'], [1367, '2017/06'], [1752, '2017/09']];

const x = i => 68 + i * 5.837;
const y = price => 110.5 + (120 - price) * 19;
const ySub = v => 733.5 - (v - 1) * 33.67;

function add(tag, attrs, text) {
    const el = document.createElementNS(NS, tag);
    for (const key in attrs) el.setAttribute(key, attrs[key]);
    if (text !== undefined) el.textContent = text;
    svg.appendChild(el);
    return el;
}

function line(x1, y1, x2, y2, cls = 'grid') {
    add('line', { x1, y1, x2, y2, class: cls });
}

function label(px, py, text, anchor = 'start', cls = 'axis') {
    add('text', { x: px, y: py, 'text-anchor': anchor, class: cls }, text);
}

// turning points -> one value per bar
function expand(points) {
    const out = [];
    for (let k = 0; k < points.length - 1; k++) {
        const [i0, v0] = points[k];
        const [i1, v1] = points[k + 1];
        for (let i = i0; i < i1; i++) out[i] = v0 + (v1 - v0) * (i - i0) / (i1 - i0);
    }
    const last = points[points.length - 1];
    out[last[0]] = last[1];
    return out;
}

function parse(text) {
    return text.split(' ').map(p => p.split(':').map(Number));
}

function band(parts) {
    return expand(parts.flatMap(([base, text]) => parse(text).map(([i, v]) => [i, base - v / TICK])));
}

function series(values, scale, cls) {
    const points = values.map((v, i) => x(i).toFixed(1) + ',' + scale(v).toFixed(1)).join(' ');
    add('polyline', { points, class: 'series ' + cls });
}

function drawBackground() {
    const defs = add('defs', {});
    defs.innerHTML = `
        <linearGradient id="bg" x1="0" y1="0" x2="0" y2="1">
            <stop offset="0" stop-color="#121827"/><stop offset=".15" stop-color="#111b29"/>
            <stop offset=".26" stop-color="#14182a"/><stop offset=".4" stop-color="#121b2b"/>
            <stop offset=".82" stop-color="#121d2d"/><stop offset=".88" stop-color="#171c33"/>
            <stop offset=".95" stop-color="#141e31"/><stop offset="1" stop-color="#131f31"/>
        </linearGradient>
        <linearGradient id="fade"><stop offset="0" stop-color="#fff" stop-opacity=".04"/><stop offset="1" stop-color="#fff" stop-opacity="0"/></linearGradient>`;
    add('rect', { width: 1880, height: 788, fill: 'url(#bg)' });
    add('rect', { x: 66, y: 27, width: 26, height: 588, fill: 'url(#fade)' });
}

function drawGrid() {
    for (let p = 95; p <= 120; p += 5) {
        line(65, y(p), 1816, y(p));
        label(63, y(p) + 4.5, p.toFixed(2), 'end');
        label(1816, y(p) + 4.5, p.toFixed(2));
    }
    for (let n = 0; n <= 24; n++) {
        if (n % 4 === 3) continue;
        const ty = Math.round(y(123.75 - n * 1.25)) + 0.5;
        const len = n % 4 === 1 ? 9 : 5;
        line(66 - len, ty, 66, ty);
        line(1815, ty, 1815 + len, ty);
    }
    for (let v = 1; v <= 4; v++) {
        const ty = Math.floor(ySub(v)) + 0.5;
        line(65, ty, 1816, ty);
        label(63, ty + 4.5, v, 'end');
        label(1816, ty + 4.5, v);
    }
    for (const [mx, name] of months) {
        line(mx + 0.5, 27, mx + 0.5, 762);
        label(mx - 2, 25, name, 'middle');
        label(mx - 2, 774, name, 'middle');
    }
    line(0, 619.5, 1880, 619.5, 'divider');
    label(67, 636, '標準偏差', 'start', 'axis name');
}

function drawCandles() {
    for (const block of blocks) {
        block.bars.trim().split(/\s+/).forEach((bar, n) => {
            const [o, h, l, c] = bar.split(',').map(v => y(block.base - v / TICK));
            const cx = Math.round(x(block.start + n));
            const cls = 'candle ' + (c <= o ? 'up' : 'down');
            add('rect', { x: cx, y: h, width: 1, height: l - h, class: cls });
            add('rect', { x: cx - 3, y: Math.min(o, c), width: 6, height: Math.max(1, Math.abs(o - c)), class: cls });
        });
    }
}

function drawBands() {
    const top = band(upper);
    const bottom = band(lower);
    ['s3', 's2', 's1', 'ma', 's1', 's2', 's3'].forEach((cls, k) => {
        series(top.map((u, i) => u + (bottom[i] - u) * k / 6), y, cls);
    });
    series(expand(parse(deviation)), ySub, 'ma');
}

function drawPeaks() {
    for (const [i, date, price, isTop] of peaks) {
        const cls = isTop ? 'up' : 'down';
        const py = y(price);
        const cx = Math.round(x(i));
        add('rect', { x: cx - 3, y: isTop ? py - 6 : py, width: 6, height: 6, class: cls });
        const ty = isTop ? py - 22 : py + 19;
        label(cx - 2, ty, date, 'start', 'peak ' + cls);
        label(cx - 2, ty + 14, price.toFixed(3), 'start', 'peak ' + cls);
    }
}

drawBackground();
drawGrid();
drawCandles();
drawBands();
drawPeaks();
notes.forEach(([nx, ny, text]) => label(nx, ny, text, 'start', 'note'));
```
